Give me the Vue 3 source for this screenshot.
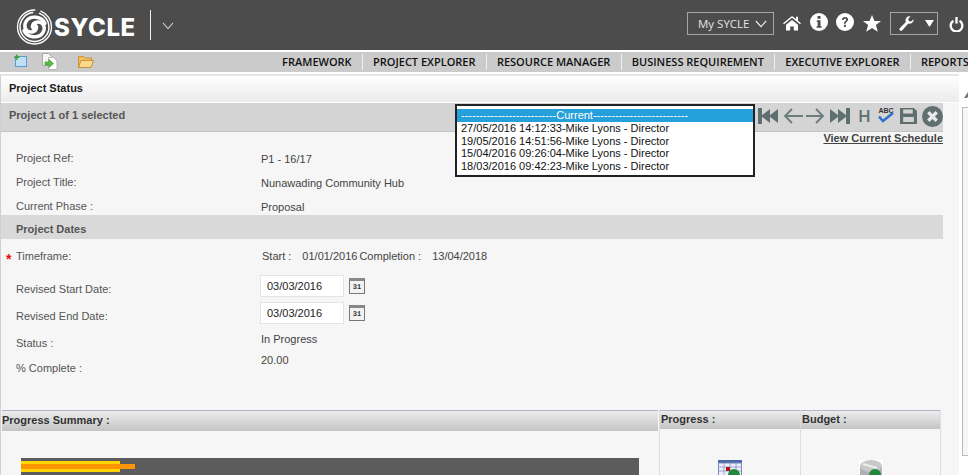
<script setup>
const navItems = ['FRAMEWORK', 'PROJECT EXPLORER', 'RESOURCE MANAGER', 'BUSINESS REQUIREMENT', 'EXECUTIVE EXPLORER', 'REPORTS']
const versions = [
  '27/05/2016 14:12:33-Mike Lyons - Director',
  '19/05/2016 14:51:56-Mike Lyons - Director',
  '15/04/2016 09:26:04-Mike Lyons - Director',
  '18/03/2016 09:42:23-Mike Lyons - Director'
]
const dashes = '-'.repeat(26)
</script>

<template>
  <div class="page">
    <header class="header">
      <svg class="logo" width="54" height="36" viewBox="0 0 54 36" fill="none" stroke="#fff" stroke-linecap="round">
        <circle cx="18.500" cy="18" r="17" stroke-width="1.300" stroke-dasharray="80 6" />
        <circle cx="18.500" cy="18" r="14.500" stroke-width="1.500" stroke-dasharray="66 7" />
        <path d="M29 14.500 C26 7 14 6 10 12.500 C7 18 10 23 15 23 C20 23 22.500 18 18.500 15.500" stroke-width="3.400" />
        <path d="M8 21.500 C11 29 23 30 27 23.500 C30 18 27 13 22 13 C17 13 14.500 18 18.500 20.500" stroke-width="3.400" />
      </svg>
      <span class="brand">SYCLE</span>
      <span class="divider"></span>
      <svg class="chev" width="12" height="8" viewBox="0 0 12 8" fill="none" stroke="#ddd" stroke-width="1.100"><path d="M1 1l5 5.500L11 1" /></svg>
      <div class="header-right">
        <div class="my-box">My SYCLE
          <svg width="12" height="8" viewBox="0 0 14 9" fill="none" stroke="#eee" stroke-width="1.300"><path d="M1 1l6 6.500L13 1" /></svg>
        </div>
        <svg class="ic-home" width="18" height="16" viewBox="0 0 18 18" preserveAspectRatio="none" fill="#fff"><path d="M9 1L0 9.200l1 1.100L9 3.200l8 7.100 1-1.100-3-2.800V2h-2v2.600z" /><path d="M3 11l6-5.300 6 5.300v6.500h-4.200V13H7.200v4.500H3z" /></svg>
        <svg class="ic-info" width="18" height="18" viewBox="0 0 18 18"><circle cx="9" cy="9" r="9" fill="#fff" /><rect x="7.500" y="3" width="3" height="2.800" fill="#4c4c4c" /><path d="M6.800 7.200h3.700v6h1.200v1.600H6.600v-1.600h1.100V8.800h-.9z" fill="#4c4c4c" /></svg>
        <svg class="ic-help" width="18" height="18" viewBox="0 0 18 18"><circle cx="9" cy="9" r="9" fill="#fff" /><path d="M5.900 7c0-2 1.400-3 3.200-3s3 1 3 2.600c0 2.300-2.400 2.200-2.400 4.100H7.900c0-2.700 2.200-2.500 2.200-4 0-.6-.4-1-1.100-1-.8 0-1.200.5-1.200 1.300z" fill="#4c4c4c" /><rect x="7.900" y="11.800" width="2" height="2.100" fill="#4c4c4c" /></svg>
        <svg class="ic-star" width="18" height="17" viewBox="0 0 18 17" fill="#fff"><path d="M9 0l2.500 6H18l-5.100 4.100 1.900 6.700L9 13l-5.800 3.800 1.900-6.700L0 6h6.500z" /></svg>
        <div class="tool-box">
          <svg width="15" height="15" viewBox="0 0 15 15" fill="#fff"><path d="M14.500 3.200a4 4 0 0 1-5.200 4.400L3.300 14.300a1.600 1.600 0 0 1-2.500-2L6.900 6A4 4 0 0 1 11.500.4L9.300 2.700l.5 2.300 2.300.5z" /></svg>
          <svg width="9" height="7" viewBox="0 0 9 7" fill="#fff"><path d="M0 0h9L4.500 7z" /></svg>
        </div>
        <svg class="ic-power" width="15" height="15" viewBox="0 0 16 17" fill="none" stroke="#fff" stroke-width="2.600"><path d="M4.500 4.200a6.600 6.600 0 1 0 7 0" /><path d="M8 0v7.500" /></svg>
      </div>
    </header>

    <div class="toolbar">
      <div class="tool-icons">
        <svg class="ti-new" width="13" height="13" viewBox="0 0 13 13"><rect x="1.500" y="2.500" width="11" height="10" fill="#bfe0f7" stroke="#5a9ccb" /><path d="M0 2.500h2V.500h1.500v2h2V4h-2v2H2V4H0z" fill="#3da32e" /></svg>
        <svg class="ti-import" width="16" height="17" viewBox="0 0 16 17"><path d="M.5.500h6l3 3v9h-9z" fill="#f6f6f6" stroke="#aaa" /><path d="M6.500 4.500h5l3.500 3.500v8.500h-8.500z" fill="#fff" stroke="#b5b5b5" /><path d="M3 9h4V6.500l4.500 4-4.500 4V12H3z" fill="#58c043" stroke="#3a8f2a" stroke-width=".6" /></svg>
        <svg class="ti-folder" width="16" height="13" viewBox="0 0 16 13"><path d="M.5 12.500V1.500h5l1 1.500h7v2" fill="#f4c05a" stroke="#c8913a" /><path d="M.5 12.500l2.500-7h12.500l-2.500 7z" fill="#fbd98b" stroke="#c8913a" /></svg>
      </div>
      <nav class="nav">
        <span v-for="item in navItems" :key="item" class="nav-item">{{ item }}</span>
      </nav>
    </div>

    <div class="content">
      <main class="main">
        <div class="panel-title">Project Status</div>
        <div class="project-bar">
          <span class="selected">Project 1 of 1 selected</span>
          <div class="actions">
            <svg class="a-first" width="20" height="16" viewBox="0 0 20 16" fill="#5f6e6e"><rect width="4" height="16" /><path d="M12 1v14L3 8z" /><path d="M20 1v14l-9-7z" /></svg>
            <svg class="a-prev" width="20" height="16" viewBox="0 0 20 16" fill="none" stroke="#6e7c7c" stroke-width="1.800"><path d="M20 8H2M9 1L2 8l7 7" /></svg>
            <svg class="a-next" width="19" height="16" viewBox="0 0 19 16" fill="none" stroke="#6e7c7c" stroke-width="1.800"><path d="M0 8h17M10 1l7 7-7 7" /></svg>
            <svg class="a-last" width="20" height="16" viewBox="0 0 20 16" fill="#5f6e6e"><path d="M0 1v14l9-7z" /><path d="M8 1v14l9-7z" /><rect x="16" width="4" height="16" /></svg>
            <span class="h-btn">H</span>
            <div class="spell">
              <span>ABC</span>
              <svg width="16" height="11" viewBox="0 0 16 11" fill="none" stroke="#2f6fd0" stroke-width="2.600"><path d="M1 4.500l4 4.500L15 1" /></svg>
            </div>
            <svg class="a-save" width="17" height="16" viewBox="0 0 16 16" preserveAspectRatio="none" fill="#5f6e6e"><path d="M0 0h13l3 3v13H0z" /><rect x="3" y="1.500" width="9" height="4" fill="#d4d4d4" /><rect x="3" y="9" width="10" height="5" fill="#d4d4d4" /></svg>
            <svg class="a-close" width="21" height="21" viewBox="0 0 20 20"><circle cx="10" cy="10" r="10" fill="#5f6e6e" /><path d="M6 6l8 8M14 6l-8 8" stroke="#e8e8e8" stroke-width="3.200" /></svg>
          </div>
        </div>
        <div class="schedule-link"><a>View Current Schedule</a></div>

        <section class="fields top-fields">
          <div class="row short"><span class="label">Project Ref:</span><span class="value drop">P1 - 16/17</span></div>
          <div class="row short"><span class="label">Project Title:</span><span class="value drop">Nunawading Community Hub</span></div>
          <div class="row tiny"><span class="label">Current Phase :</span><span class="value drop">Proposal</span></div>
        </section>
        <div class="section-bar">Project Dates</div>
        <section class="fields dates">
          <div class="row timeframe">
            <span class="req">*</span>
            <span class="label">Timeframe:</span>
            <span class="value times"><span class="start">Start :</span><span class="d1">01/01/2016</span><span>Completion :</span><span class="d2">13/04/2018</span></span>
          </div>
          <div class="row input-row">
            <span class="label low">Revised Start Date:</span>
            <span class="value date-input-wrap"><input class="date-input" value="03/03/2016" readonly /><span class="cal"><span>31</span></span></span>
          </div>
          <div class="row input-row second">
            <span class="label low">Revised End Date:</span>
            <span class="value date-input-wrap"><input class="date-input" value="03/03/2016" readonly /><span class="cal"><span>31</span></span></span>
          </div>
          <div class="row status"><span class="label">Status :</span><span class="value up">In Progress</span></div>
          <div class="row pct"><span class="label">% Complete :</span><span class="value up2">20.00</span></div>
        </section>

        <section class="summary">
          <div class="sum-col sum-main">
            <div class="sum-head tall">Progress Summary :</div>
            <div class="chart">
              <div class="bar-y"><div class="bar-o"></div></div>
            </div>
          </div>
          <div class="sum-col sum-side">
            <div class="sum-head">Progress :</div>
            <div class="sum-icon">
              <svg width="24" height="16" viewBox="0 0 24 16">
                <rect x="0" y="0" width="24" height="3" fill="#4a6aa8" />
                <rect x="0.500" y="3" width="23" height="13" fill="#eef" stroke="#7a8ab8" />
                <path d="M6 3v13M12 3v13M18 3v13M0 7h24M0 11h24" stroke="#8a96c0" stroke-width=".8" />
                <rect x="8" y="7" width="4" height="4" fill="#b01010" />
                <circle cx="16" cy="15" r="6" fill="#1f8a3a" />
              </svg>
            </div>
          </div>
          <div class="sum-col sum-side">
            <div class="sum-head">Budget :</div>
            <div class="sum-icon">
              <svg width="24" height="16" viewBox="0 0 24 16">
                <rect width="24" height="16" fill="#fff" />
                <path d="M1 6v10h22V6z" fill="#b0b0b0" />
                <ellipse cx="12" cy="6" rx="11" ry="6" fill="#c8c8c8" />
                <path d="M4 4l14 4" stroke="#eee" stroke-width="2" />
                <circle cx="16" cy="15" r="6" fill="#1f8a3a" />
              </svg>
            </div>
          </div>
        </section>

        <div class="version-list">
          <div class="version current">{{ dashes }}Current{{ dashes }}</div>
          <div v-for="v in versions" :key="v" class="version">{{ v }}</div>
        </div>
      </main>
      <aside class="side">
        <svg class="side-arrow" width="6" height="9" viewBox="0 0 6 9" fill="#777"><path d="M0 9l6-9v5l-3 4z" /></svg>
        <div class="side-box"></div>
      </aside>
    </div>
  </div>
</template>

<style scoped>
.page {
  position: relative;
  width: 968px;
  height: 475px;
  overflow: hidden;
  background: #fff;
  font-family: "Liberation Sans", Arial, sans-serif;
  font-size: 11px;
  color: #444;
}
.header {
  height: 50px;
  background: #4c4c4c;
  display: flex;
  align-items: center;
  box-sizing: border-box;
  padding-left: 16px;
}
.logo { flex: none; margin-top: 3px; }
.brand {
  margin-left: -16px;
  margin-top: 4px;
  font-family: Inter, sans-serif;
  font-weight: 800;
  font-size: 24px;
  letter-spacing: 0.6px;
  color: #fff;
  width: 83px;
  flex: none;
}
.divider { width: 1px; height: 30px; background: #eee; margin-left: 13px; }
.chev { margin-left: 11px; margin-top: 1px; }
.header-right {
  margin-left: auto;
  display: flex;
  align-items: center;
  padding-right: 4px;
}
.my-box {
  width: 87px;
  height: 23px;
  box-sizing: border-box;
  border: 1px solid #a5a5a5;
  display: flex;
  align-items: center;
  justify-content: space-between;
  padding: 0 6px 0 10px;
  color: #e4e4e4;
  font-family: "Open Sans", sans-serif;
  font-size: 11.500px;
  margin-top: -3px;
}
.ic-home { margin-left: 9px; margin-top: -5px; }
.ic-info { margin-left: 9px; margin-top: -7px; }
.ic-help { margin-left: 8px; margin-top: -7px; }
.ic-star { margin-left: 9px; margin-top: -4px; }
.tool-box {
  width: 48px;
  height: 23px;
  box-sizing: border-box;
  border: 1px solid #a5a5a5;
  margin-left: 9px;
  margin-top: -3px;
  display: flex;
  align-items: center;
  gap: 11px;
  padding-left: 8px;
}
.ic-power { margin-left: 11px; margin-top: -2px; }

.toolbar {
  height: 20px;
  margin-top: 2px;
  background: #cbcbcb;
  display: flex;
  align-items: center;
  justify-content: space-between;
  overflow: hidden;
}
.tool-icons { display: flex; align-items: center; padding-left: 14px; }
.ti-new { margin-top: -3px; }
.ti-import { margin-left: 15px; margin-top: -1px; }
.ti-folder { margin-left: 20px; margin-top: -2px; }
.nav { display: flex; align-items: center; margin-left: auto; margin-right: -11px; }
.nav-item {
  font-family: "Open Sans", sans-serif;
  font-weight: 600;
  font-size: 11px;
  color: #111;
  padding: 0 10.200px;
  line-height: 16px;
  border-right: 1px solid #f0f0f0;
  white-space: nowrap;
}
.nav-item:last-child { border-right: 0; }

.content { display: flex; margin-top: 2px; height: 401px; }
.main {
  position: relative;
  width: 959px;
  flex: none;
  background: #f6f6f6;
  border-left: 1px solid #d0d0d0;
  box-sizing: border-box;
  border-top: 2px solid #e6e6e6;
}
.panel-title {
  height: 26px;
  line-height: 25px;
  padding-left: 8px;
  font-weight: 700;
  color: #1c1c1c;
  background: linear-gradient(#fff, #ebebeb);
  border-bottom: 1px solid #fff;
}
.project-bar {
  width: 942px;
  height: 29px;
  box-sizing: border-box;
  background: #d4d4d4;
  border-bottom: 1px solid #c4c4c4;
  display: flex;
  align-items: center;
  padding-left: 8px;
  font-weight: 700;
  color: #555;
}
.selected { margin-top: -5px; }
.actions {
  margin-left: auto;
  display: flex;
  align-items: center;
  margin-top: -2px;
}
.a-prev { margin-left: 5px; }
.a-next { margin-left: 3px; }
.a-last { margin-left: 5px; }
.h-btn {
  font-size: 17px;
  font-weight: 600;
  line-height: 16px;
  font-family: "Open Sans", sans-serif;
  color: #5f6e6e;
  margin-left: 8px;
  width: 12px;
}
.spell { display: flex; flex-direction: column; align-items: center; width: 16px; margin-left: 8px; margin-top: -3px; }
.spell span { font-size: 7px; line-height: 7px; color: #333; }
.spell svg { margin-top: -2px; }
.a-save { margin-left: 6px; }
.a-close { margin-left: 5px; }
.schedule-link {
  height: 14px;
  width: 942px;
  text-align: right;
  line-height: 13px;
  font-weight: 700;
  color: #444;
}
.schedule-link a { text-decoration: underline; }

.fields { padding-left: 15px; }
.row { display: flex; align-items: flex-start; line-height: 24px; }
.short { height: 24px; }
.tiny { height: 21px; }
.label { width: 245px; flex: none; color: #555; }
.value { color: #444; }
.drop { padding-top: 1px; }
.section-bar {
  width: 942px;
  height: 24px;
  line-height: 28px;
  background: #d9d9d9;
  padding-left: 15px;
  box-sizing: border-box;
  font-weight: 700;
  color: #555;
}
.timeframe { height: 24px; margin-top: 5px; position: relative; }
.req { position: absolute; left: -10px; top: 3px; color: #e01010; font-size: 14px; font-weight: 700; }
.times { display: flex; margin-left: 1px; }
.start { margin-right: 11px; }
.d1 { margin-right: 2px; }
.d2 { margin-left: 11px; }
.input-row { height: 27px; margin-top: 7px; }
.input-row.second { margin-top: 0; }
.low { padding-top: 2px; }
.date-input-wrap { display: flex; align-items: center; margin-left: -1px; height: 22px; }
.date-input {
  width: 84px;
  height: 22px;
  box-sizing: border-box;
  border: 1px solid #e4e4e4;
  background: #fff;
  padding: 0 6px;
  font: 11px "Liberation Sans", Arial, sans-serif;
  color: #222;
  outline: none;
}
.cal {
  width: 16px;
  height: 16px;
  box-sizing: border-box;
  margin-left: 5px;
  border: 1px solid #777;
  border-top: 3px solid #888;
  background: #f2f2f2;
  display: flex;
  align-items: center;
  justify-content: center;
}
.cal span { font: 700 7px "Liberation Mono", monospace; color: #333; }
.status { height: 25px; margin-top: 2px; }
.up { margin-top: -4px; }
.pct { height: 24px; }
.up2 { margin-top: -8px; }

.summary {
  position: absolute;
  left: 1px;
  top: 334px;
  width: 939px;
  display: flex;
}
.sum-col { box-sizing: border-box; }
.sum-main { width: 657px; padding-right: 1px; }
.sum-side { width: 141px; border-left: 1px solid #ddd; height: 70px; }
.sum-side:last-child { border-right: 1px solid #ddd; }
.sum-head {
  height: 19px;
  line-height: 16px;
  box-sizing: border-box;
  border-top: 1px solid #b6b2ca;
  background: linear-gradient(#ededed, #c4c4c4);
  font-weight: 700;
  font-size: 11px;
  color: #333;
  padding-left: 1px;
}
.sum-head.tall { height: 21px; line-height: 19px; padding-left: 0; }
.chart {
  margin: 27px 19px 0 19px;
  height: 30px;
  background: #5c5c5c;
  padding-top: 3px;
  box-sizing: border-box;
}
.bar-y { width: 99px; height: 11px; background: #ffd400; padding-top: 3px; box-sizing: border-box; }
.bar-o { width: 114px; height: 5px; background: #ff9500; }
.sum-icon { display: flex; justify-content: center; padding-top: 31px; }

.version-list {
  position: absolute;
  left: 454px;
  top: 28px;
  width: 300px;
  height: 73px;
  box-sizing: border-box;
  background: #fff;
  border: 2px solid #222;
  padding-top: 3px;
  z-index: 2;
}
.version {
  height: 12.600px;
  line-height: 13px;
  padding-left: 4px;
  color: #111;
  white-space: nowrap;
  overflow: hidden;
}
.version.current { background: #26a0da; color: #fff; height: 13px; }

.side { width: 9px; flex: none; position: relative; background: #fff; }
.side-arrow { position: absolute; left: 5px; top: 15px; }
.side-box {
  position: absolute;
  left: 3px;
  top: 33px;
  right: 0;
  bottom: 19px;
  background: #f6f6f6;
  border: 1px solid #bbb;
  border-right: 0;
  box-sizing: border-box;
}
</style>

<style>
html, body { margin: 0; background: #fff; }
</style>
